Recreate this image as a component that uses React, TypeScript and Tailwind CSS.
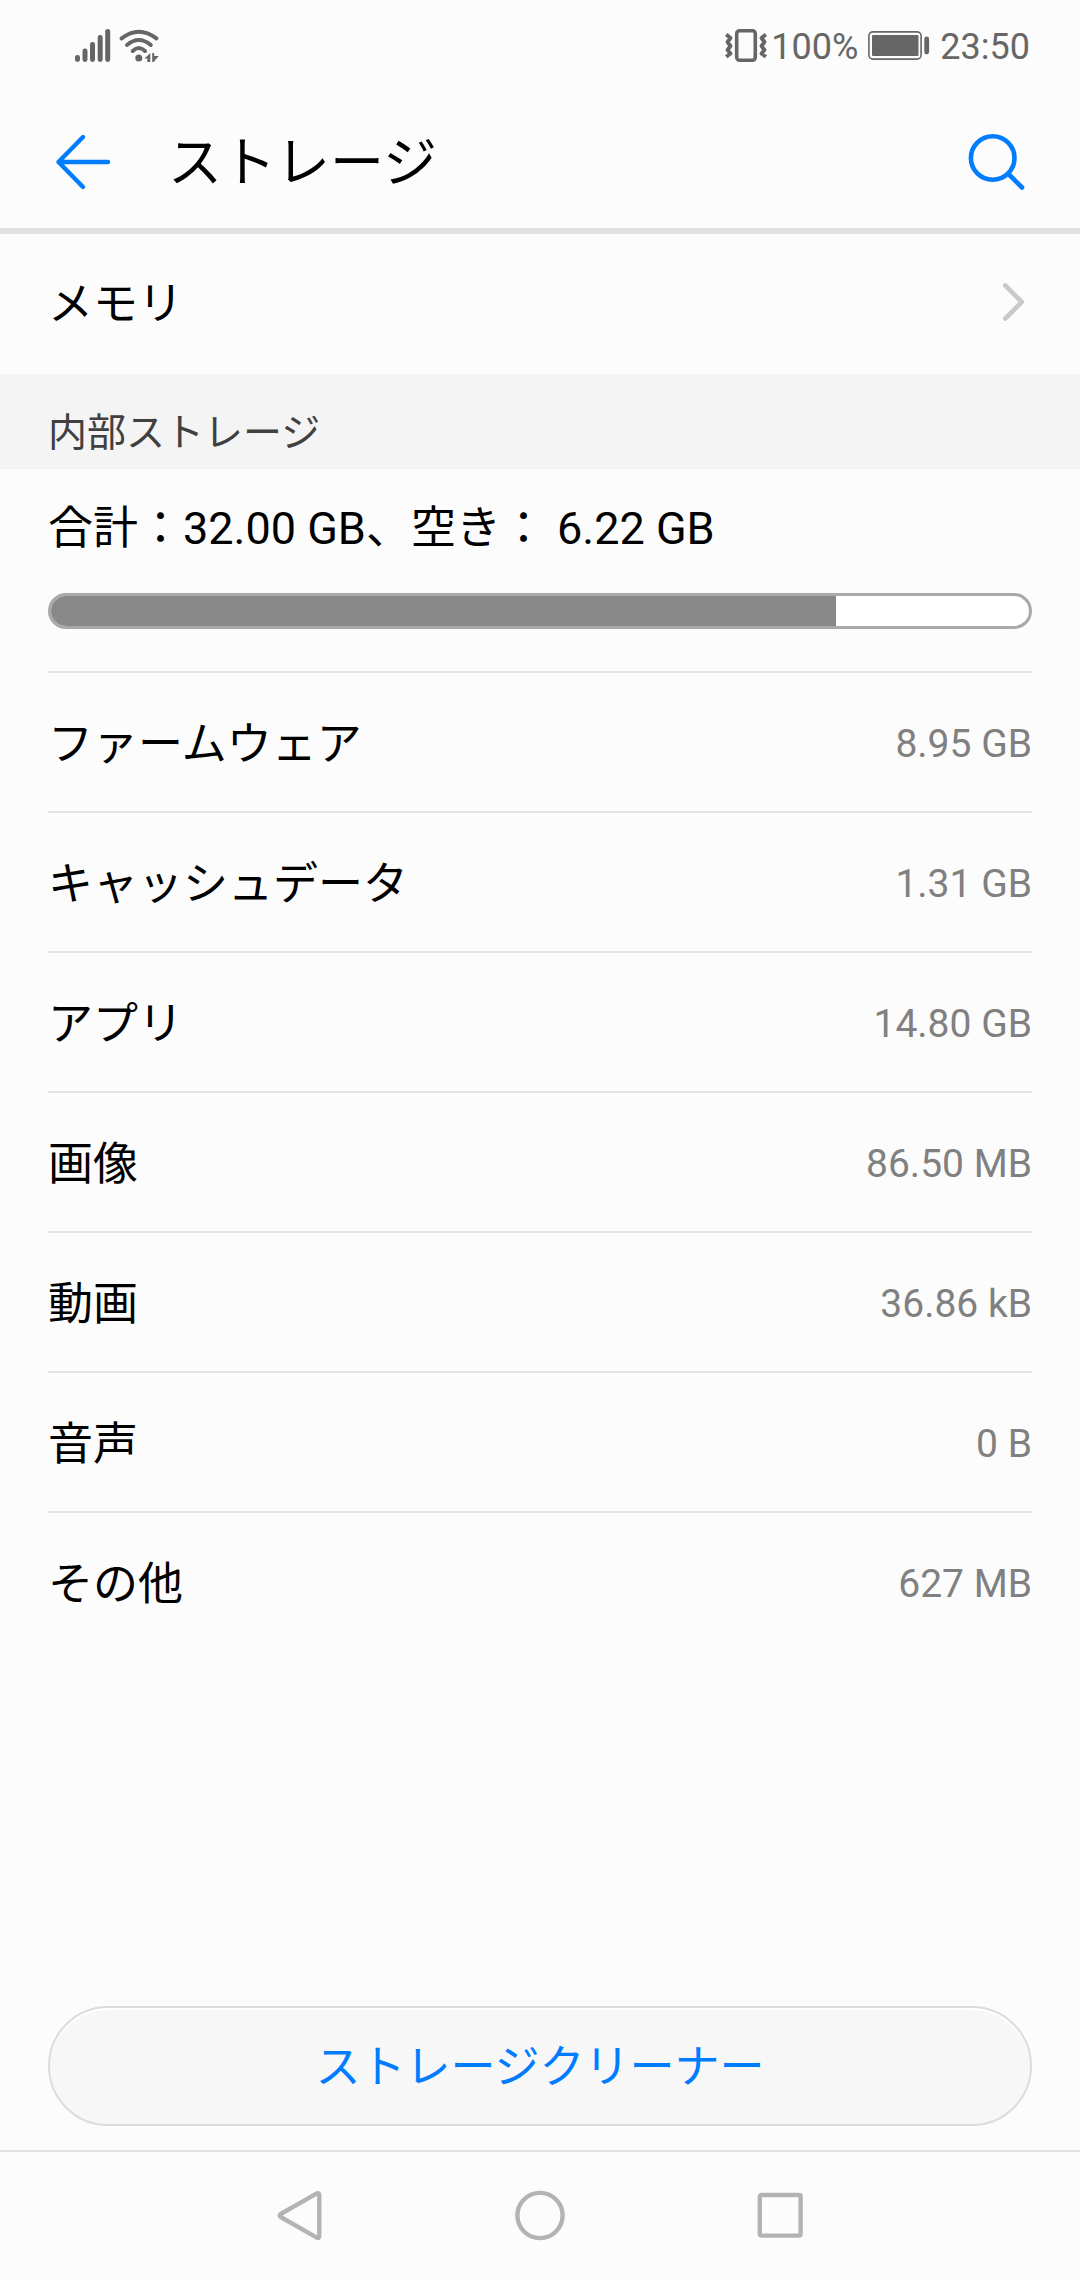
import type { ReactNode } from "react";

interface StorageItem {
  label: string;
  value: string;
}

const USED_PERCENT = 80.3;

const items: StorageItem[] = [
  { label: "ファームウェア", value: "8.95 GB" },
  { label: "キャッシュデータ", value: "1.31 GB" },
  { label: "アプリ", value: "14.80 GB" },
  { label: "画像", value: "86.50 MB" },
  { label: "動画", value: "36.86 kB" },
  { label: "音声", value: "0 B" },
  { label: "その他", value: "627 MB" },
];

function SignalIcon() {
  return (
    <svg width="36" height="34" viewBox="0 0 36 34" fill="currentColor" aria-hidden="true">
      <rect x="0" y="26" width="5" height="7" rx="2.4" />
      <rect x="7.5" y="19.5" width="5" height="13.5" rx="2.4" />
      <rect x="15" y="13" width="5" height="20" rx="2.4" />
      <rect x="22.7" y="6" width="5" height="27" rx="2.4" />
      <rect x="30.2" y="0" width="5" height="33" rx="2.4" />
    </svg>
  );
}

function WifiIcon() {
  return (
    <svg width="40" height="34" viewBox="0 0 40 34" aria-hidden="true">
      <g fill="none" stroke="currentColor" strokeWidth="4" strokeLinecap="round">
        <path d="M2.6 9.4Q19.8 -4 37.4 9.4" />
        <path d="M8 16Q19.8 6 31.8 16" />
        <path d="M13.7 22Q19.8 16 26 22" />
      </g>
      <g fill="currentColor">
        <circle cx="19.8" cy="29" r="3.5" />
        <path d="M25.5 29.5 31.3 24V33H28.3V29.5Z" />
        <path d="M33.2 24H35.2V27H39.8L35.2 32.2V33H33.2Z" />
      </g>
    </svg>
  );
}

function VibrateIcon() {
  return (
    <svg width="42" height="34" viewBox="0 0 42 34" fill="none" stroke="currentColor" aria-hidden="true">
      <rect x="11.7" y="1.7" width="18.6" height="29.6" rx="3" strokeWidth="3.6" />
      <path
        d="M1.2 5.5 5.5 9 2.5 13 5.5 17 2.5 21 5.5 24.5 1.2 27.8M40.8 5.5 36.5 9 39.5 13 36.5 17 39.5 21 36.5 24.5 40.8 27.8"
        strokeWidth="3.8"
        strokeLinejoin="round"
      />
    </svg>
  );
}

function BatteryIcon() {
  return (
    <svg width="62" height="30" viewBox="0 0 62 30" aria-hidden="true">
      <rect x="0.9" y="0.9" width="52.2" height="27.2" rx="4" fill="none" stroke="currentColor" strokeWidth="1.6" />
      <rect x="4" y="4" width="46.5" height="21" rx="1" fill="currentColor" />
      <rect x="56.3" y="5.5" width="4.8" height="18" rx="2.4" fill="currentColor" />
    </svg>
  );
}

function StatusBar() {
  return (
    <div className="flex h-23 items-center justify-between pr-[50px] pl-[75px] text-4xl text-[#666]">
      <div className="flex items-center gap-2">
        <SignalIcon />
        <WifiIcon />
      </div>
      <div className="flex items-center gap-2.5">
        <div className="flex items-center gap-1">
          <VibrateIcon />
          <span className="pt-0.5">100%</span>
        </div>
        <BatteryIcon />
        <span className="pt-0.5">23:50</span>
      </div>
    </div>
  );
}

function Header() {
  return (
    <header className="flex h-[142px] items-center border-b-6 border-[#e1e1e1] pt-1 pr-[54px] pl-[54px]">
      <button type="button" aria-label="戻る" className="text-[#007dff]">
        <svg width="58" height="58" viewBox="0 0 58 58" fill="none" stroke="currentColor" strokeWidth="4.4" strokeLinecap="round" strokeLinejoin="round">
          <path d="M54 29H4.5M29 4 4.5 29 29 54" />
        </svg>
      </button>
      <h1 className="ml-14 flex-1 pt-1 text-[54px] leading-none">ストレージ</h1>
      <button type="button" aria-label="検索" className="text-[#007dff]">
        <svg width="60" height="58" viewBox="0 0 60 58" fill="none" stroke="currentColor" strokeWidth="4.6" strokeLinecap="round">
          <circle cx="26.7" cy="25" r="21.8" />
          <path d="M42.5 41 56 54.5" />
        </svg>
      </button>
    </header>
  );
}

function NavButton({ label, children }: { label: string; children: ReactNode }) {
  return (
    <button type="button" aria-label={label} className="flex w-60 items-center justify-center text-[#b3b3b3]">
      <svg width="52" height="52" viewBox="0 0 52 52" fill="none" stroke="currentColor" strokeWidth="4.4" strokeLinejoin="round">
        {children}
      </svg>
    </button>
  );
}

export default function App() {
  return (
    <div className="flex min-h-screen flex-col bg-[#fcfcfc] font-[Roboto,'Noto_Sans_CJK_JP',sans-serif] text-black">
      <StatusBar />
      <Header />

      <main className="flex flex-1 flex-col">
        <a href="#memory" className="flex h-[140px] items-center justify-between pr-[54px] pb-1 pl-12 text-[45px] leading-none">
          <span className="pt-1">メモリ</span>
          <svg width="26" height="42" viewBox="0 0 26 42" fill="none" stroke="#c9c9c9" strokeWidth="4.6" strokeLinecap="round" strokeLinejoin="round" aria-hidden="true">
            <path d="M5.3 4.5 21.8 21 5.3 37.5" />
          </svg>
        </a>

        <h2 className="flex h-[95px] items-end bg-[#f4f4f4] px-12 pb-4 text-[39px] leading-none text-[#404040]">
          内部ストレージ
        </h2>

        <section className="px-12">
          <p className="pt-[37px] text-[45px] leading-none">合計：32.00 GB、空き： 6.22 GB</p>
          <div
            role="progressbar"
            aria-label="内部ストレージ"
            aria-valuenow={USED_PERCENT}
            className="mt-[42px] mb-[42px] h-9 overflow-hidden rounded-full border-3 border-[#a9a9a9] bg-white"
          >
            <div className="h-full bg-[#888]" style={{ width: `${USED_PERCENT}%` }} />
          </div>

          <dl>
            {items.map((item) => (
              <div key={item.label} className="flex h-[140px] items-center justify-between border-t-2 border-[#e4e4e4] pt-1">
                <dt className="text-[45px] leading-none">{item.label}</dt>
                <dd className="text-[39px] leading-none text-[#808080]">{item.value}</dd>
              </div>
            ))}
          </dl>
        </section>

        <div className="mt-auto px-12 pb-6">
          <button
            type="button"
            className="h-30 w-full rounded-full border-2 border-[#dcdcdc] bg-[#f7f7f7] pt-0.5 text-[45px] leading-none text-[#007dff] shadow-[inset_0_2px_1px_#fff]"
          >
            ストレージクリーナー
          </button>
        </div>
      </main>

      <nav className="flex h-[130px] justify-center border-t-2 border-[#e1e1e1]">
        <NavButton label="戻る">
          <path d="M42.4 3.7Q45.3 2 45.3 5.5V45.5Q45.3 49.2 42.4 47.3L6.7 27Q4.6 25.5 6.7 24Z" />
        </NavButton>
        <NavButton label="ホーム">
          <circle cx="26" cy="25.5" r="22.6" />
        </NavButton>
        <NavButton label="履歴">
          <rect x="5.8" y="5" width="40.8" height="40.6" rx="1.5" />
        </NavButton>
      </nav>
    </div>
  );
}
